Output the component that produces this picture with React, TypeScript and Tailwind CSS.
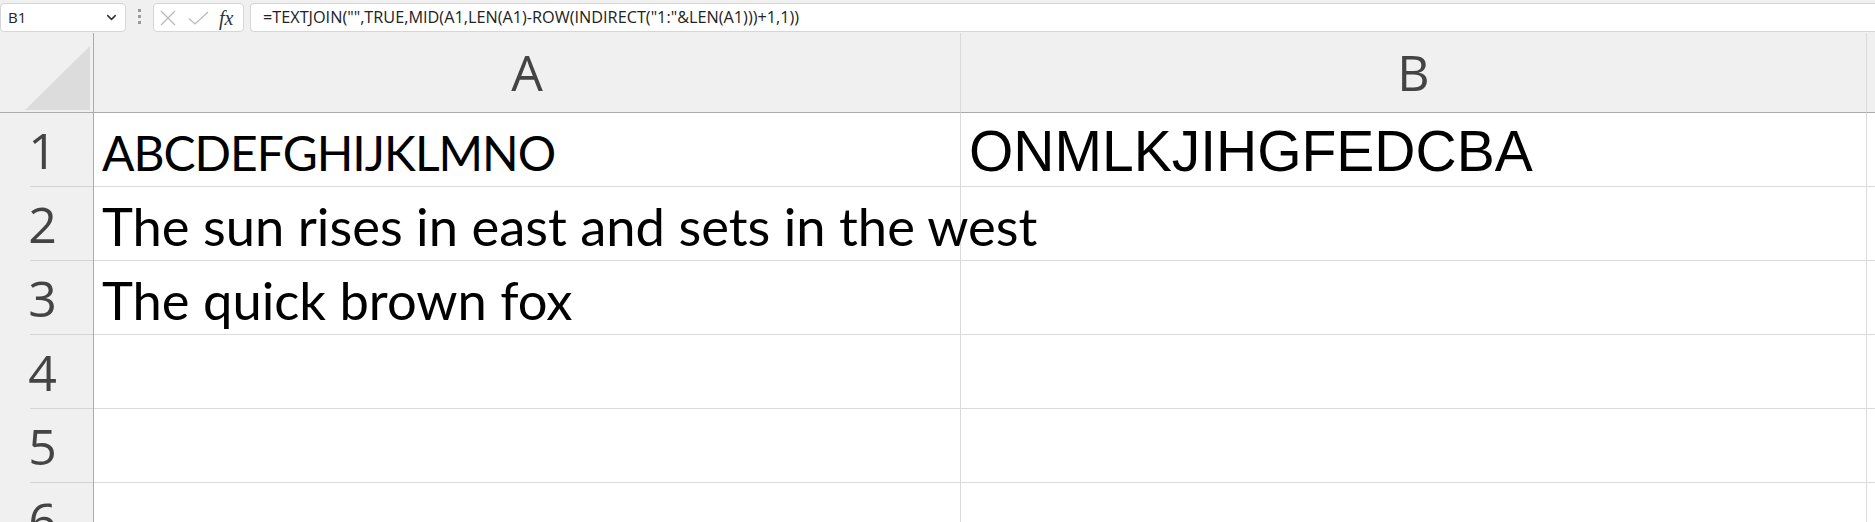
import { ChevronDown } from "lucide-react";

const rows: Array<{ n: number; a?: string; b?: string; big?: boolean }> = [
  { n: 1, a: "ABCDEFGHIJKLMNO", b: "ONMLKJIHGFEDCBA" },
  { n: 2, a: "The sun rises in east and sets in the west", big: true },
  { n: 3, a: "The quick brown fox", big: true },
  { n: 4 },
  { n: 5 },
  { n: 6 },
];

const formula = '=TEXTJOIN("",TRUE,MID(A1,LEN(A1)-ROW(INDIRECT("1:"&LEN(A1)))+1,1))';

function Toolbar() {
  return (
    <div className="flex h-[33px] items-start pt-[3px] bg-[#f0f0f0]">
      <div className="flex h-[29px] w-[126px] items-center justify-between rounded-[4px] border border-[#d6d6d6] bg-white pl-[7px] pr-[6px]">
        <span className="text-[15px] text-[#222] font-['Open_Sans',sans-serif]">B1</span>
        <ChevronDown className="h-[15px] w-[15px] text-[#333]" strokeWidth={2.5} />
      </div>
      <div className="flex w-[27px] flex-col items-center justify-center gap-[3px] self-stretch pb-[3px]">
        <span className="h-[3px] w-[3px] bg-[#9a9a9a]" />
        <span className="h-[3px] w-[3px] bg-[#9a9a9a]" />
        <span className="h-[3px] w-[3px] bg-[#9a9a9a]" />
      </div>
      <div className="flex h-[29px] w-[91px] items-center rounded-[4px] border border-[#d6d6d6] bg-white pl-[6px]">
        <svg width="16" height="16" viewBox="0 0 16 16" className="text-[#b8b8b8]">
          <path d="M1 1 L15 15 M15 1 L1 15" stroke="currentColor" strokeWidth="1.2" fill="none" />
        </svg>
        <svg width="21" height="14" viewBox="0 0 21 14" className="ml-[12px] text-[#b8b8b8]">
          <path d="M1 7.5 L7 13 L20 1" stroke="currentColor" strokeWidth="1.2" fill="none" />
        </svg>
        <span className="ml-[10px] text-[20px] leading-none italic text-[#333] font-['Liberation_Serif',serif]">fx</span>
      </div>
      <div className="ml-[6px] flex h-[29px] flex-1 items-center rounded-l-[4px] border border-r-0 border-[#d6d6d6] bg-white pl-[12px]">
        <span className="whitespace-nowrap text-[16.25px] text-[#222] font-['Open_Sans',sans-serif]">{formula}</span>
      </div>
    </div>
  );
}

function Corner() {
  return (
    <div className="relative h-[80px] border-r border-b border-[#ababab] bg-[#f0f0f0]">
      <svg className="absolute left-[25px] top-[13px]" width="65" height="64" viewBox="0 0 65 64">
        <polygon points="65,0 65,64 0,64" fill="#dcdcdc" />
      </svg>
    </div>
  );
}

function ColHead({ label, last }: { label: string; last?: boolean }) {
  return (
    <div
      className={`flex h-[80px] items-center justify-center border-b border-[#ababab] bg-[#f0f0f0] ${
        last ? "" : "border-r border-r-[#dadada]"
      }`}
    >
      <span className="text-[50px] leading-none text-[#444] font-['Open_Sans',sans-serif] pb-[2px]">{label}</span>
    </div>
  );
}

export default function App() {
  return (
    <div className="h-[522px] w-[1875px] overflow-hidden bg-[#f0f0f0]">
      <Toolbar />
      <div className="grid grid-cols-[94px_867px_906px_1fr]">
        <Corner />
        <ColHead label="A" />
        <ColHead label="B" />
        <ColHead label="" last />
        {rows.map((r) => (
          <div key={r.n} className="contents">
            <div className="relative flex h-[74px] items-center justify-center border-r border-[#ababab] bg-[#f0f0f0] pr-[8px]">
              <span className="text-[50px] leading-none text-[#444] font-['Open_Sans',sans-serif]">{r.n}</span>
              <div className="absolute bottom-0 left-[30px] right-0 h-px bg-[#d4d4d4]" />
            </div>
            <div className="relative z-10 flex h-[74px] items-end border-r border-b border-[#dadada] bg-white pl-[8px]">
              {r.a && (
                <span
                  className={
                    r.big
                      ? "whitespace-nowrap text-[52.5px] leading-none text-black font-['Lato',sans-serif] pb-[8px]"
                      : "whitespace-nowrap text-[48px] leading-none text-black font-['Lato',sans-serif] pb-[9px] tracking-[-1px]"
                  }
                >
                  {r.a}
                </span>
              )}
            </div>
            <div className="relative flex h-[74px] items-end border-r border-b border-[#dadada] bg-white pl-[8px]">
              {r.b && (
                <span className="whitespace-nowrap text-[57px] leading-none text-black font-['Liberation_Sans',Arial,sans-serif] pb-[6px]">
                  {r.b}
                </span>
              )}
            </div>
            <div className="h-[74px] border-b border-[#dadada] bg-white" />
          </div>
        ))}
      </div>
    </div>
  );
}
